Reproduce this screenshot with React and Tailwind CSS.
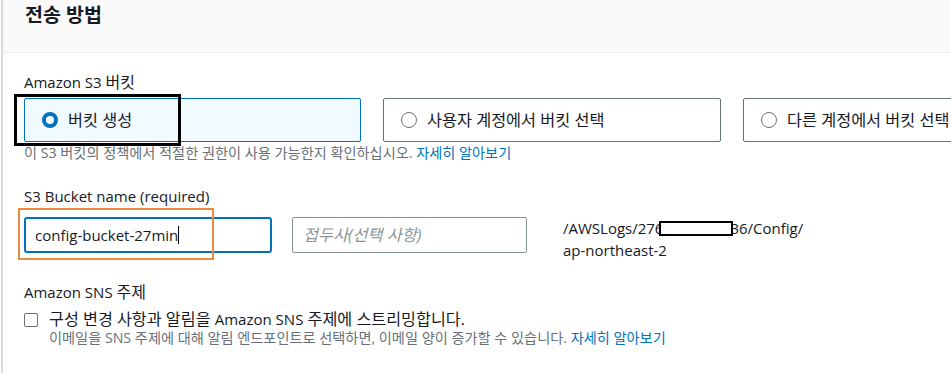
import React from "react";

function Radio({ checked }) {
  return checked ? (
    <span className="inline-block w-[16px] h-[16px] rounded-full border-[4px] border-[#0073bb] bg-white shrink-0" />
  ) : (
    <span className="inline-block w-[16px] h-[16px] rounded-full border-[1.5px] border-[#687078] bg-white shrink-0" />
  );
}

function Tile({ checked, label, children }) {
  return (
    <div
      className={
        "relative h-[44px] rounded-[2px] border flex items-center pl-[17px] gap-[10px] " +
        (checked ? "border-[#0073bb] bg-[#f1faff]" : "border-[#687078] bg-white")
      }
    >
      <Radio checked={checked} />
      <span className="text-[16.3px] leading-[20px] text-[#16191f] whitespace-nowrap">{label}</span>
      {children}
    </div>
  );
}

export default function App() {
  return (
    <div className="w-[951px] h-[373px] overflow-hidden bg-white pl-[1px] font-['Open_Sans','Noto_Sans_CJK_KR',sans-serif] text-[#16191f]">
      <div className="h-full w-[1200px] border-l-2 border-[#d5dbdb]">
        <div className="h-[53px] bg-[#fafafa] border-b border-[#eaeded] pl-[22px] pt-[2px]">
          <h2 className="text-[19.5px] leading-[26px] font-bold text-[#16191f]">전송 방법</h2>
        </div>
        <div className="pl-[21px]">
          <div className="pt-[19px] text-[15px] leading-[20px]">
            Amazon S3 <span className="text-[16px]">버킷</span>
          </div>
          <div className="mt-[6px] grid grid-cols-[337px_338px_338px] gap-[22px]">
            <Tile checked label="버킷 생성">
              <div className="absolute left-[-11px] top-[-5px] w-[167px] h-[52px] border-[3px] border-black pointer-events-none" />
            </Tile>
            <Tile label="사용자 계정에서 버킷 선택" />
            <Tile label="다른 계정에서 버킷 선택" />
          </div>
          <div className="mt-[2px] text-[14.2px] leading-[18px] text-[#687078] whitespace-nowrap">
            이 S3 버킷의 정책에서 적절한 권한이 사용 가능한지 확인하십시오.{" "}
            <span className="text-[#0073bb]">자세히 알아보기</span>
          </div>

          <div className="mt-[24px] text-[15px] leading-[20px]">S3 Bucket name (required)</div>
          <div className="mt-[11px] flex items-start">
            <div className="relative w-[248px] h-[36px] rounded-[3px] border-2 border-[#0073bb] bg-white flex items-center pl-[9px]">
              <span className="text-[15px] leading-[20px] text-[#16191f]">config-bucket-27min</span>
              <span className="inline-block w-[1px] h-[18px] bg-black" />
              <div className="absolute left-[-8px] top-[-11px] w-[196px] h-[52px] border-2 border-[#ec8b3f] pointer-events-none" />
            </div>
            <div className="ml-[20px] w-[235px] h-[36px] rounded-[2px] border border-[#879596] bg-white flex items-center pl-[10px]">
              <span className="text-[16.3px] leading-[20px] italic text-[#879596] whitespace-nowrap">접두사(선택 사항)</span>
            </div>
            <div className="ml-[36px] text-[15px] leading-[22px] text-[#16191f]">
              <div className="whitespace-nowrap">
                /AWSLogs/276
                <span className="relative z-10 inline-block align-[-2px] w-[74px] h-[15px] border-[2.5px] border-black bg-white -ml-[4px] -mr-[3px]" />
                36/Config/
              </div>
              <div>ap-northeast-2</div>
            </div>
          </div>

          <div className="mt-[21px] text-[15px] leading-[20px]">
            Amazon SNS <span className="text-[16px]">주제</span>
          </div>
          <div className="mt-[7px] flex items-start gap-[11px]">
            <span className="mt-[4px] inline-block w-[14px] h-[14px] rounded-[2px] border-[1.5px] border-[#687078] bg-white shrink-0" />
            <div>
              <div className="text-[16.2px] leading-[20px] whitespace-nowrap">
                구성 변경 사항과 알림을 <span className="text-[15px]">Amazon SNS</span> 주제에 스트리밍합니다.
              </div>
              <div className="text-[14.2px] leading-[18px] text-[#687078] whitespace-nowrap">
                이메일을 SNS 주제에 대해 알림 엔드포인트로 선택하면, 이메일 양이 증가할 수 있습니다.{" "}
                <span className="text-[#0073bb]">자세히 알아보기</span>
              </div>
            </div>
          </div>
        </div>
      </div>
    </div>
  );
}
